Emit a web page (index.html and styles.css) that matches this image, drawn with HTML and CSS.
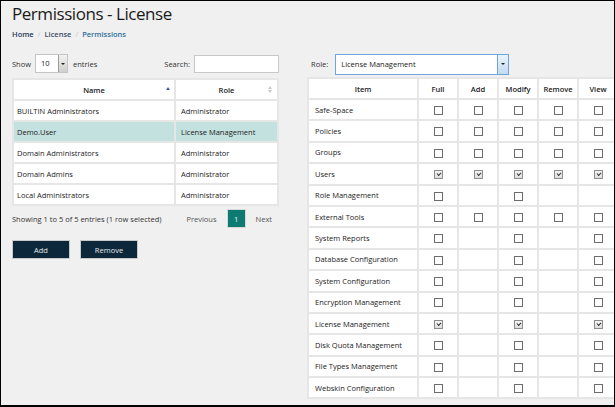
FILE: index.html
```html
<!DOCTYPE html>
<html>
<head>
<meta charset="utf-8">
<link rel="stylesheet" href="styles.css">
</head>
<body>
<div class="frame">
  <div class="page">
    <h1 class="title">Permissions - License</h1>
    <div class="crumbs">
      <span class="c-home">Home</span><span class="sep">/</span><span class="c-lic">License</span><span class="sep">/</span><span class="c-perm">Permissions</span>
    </div>
    <div class="main">
      <div class="left">
        <div class="toolbar">
          <span class="lbl">Show</span>
          <span class="select small"><span class="val">10</span><span class="arrow"></span></span>
          <span class="lbl">entries</span>
          <span class="spacer"></span>
          <span class="lbl">Search:</span>
          <span class="input"></span>
        </div>
        <table class="grid users">
          <thead>
            <tr><th class="c-name">Name<span class="sort-up"></span></th><th class="c-role">Role<span class="sort-both"></span></th></tr>
          </thead>
          <tbody>
            <tr><td>BUILTIN Administrators</td><td>Administrator</td></tr>
            <tr class="sel"><td>Demo.User</td><td>License Management</td></tr>
            <tr><td>Domain Administrators</td><td>Administrator</td></tr>
            <tr><td>Domain Admins</td><td>Administrator</td></tr>
            <tr><td>Local Administrators</td><td>Administrator</td></tr>
          </tbody>
        </table>
        <div class="info">
          <span class="count">Showing 1 to 5 of 5 entries (1 row selected)</span>
          <div class="pager">
            <span class="pg">Previous</span>
            <span class="pg cur">1</span>
            <span class="pg">Next</span>
          </div>
        </div>
        <div class="actions">
          <button class="btn">Add</button>
          <button class="btn">Remove</button>
        </div>
      </div>
      <div class="right">
        <div class="rolebar">
          <span class="lbl">Role:</span>
          <span class="select role"><span class="val">License Management</span><span class="arrow"></span></span>
        </div>
        <table class="grid perms">
          <thead>
            <tr><th class="c-item">Item</th><th>Full</th><th>Add</th><th>Modify</th><th>Remove</th><th>View</th></tr>
          </thead>
          <tbody>
            <tr><td>Safe-Space</td><td><i class="cb"></i></td><td><i class="cb"></i></td><td><i class="cb"></i></td><td><i class="cb"></i></td><td><i class="cb"></i></td></tr>
            <tr><td>Policies</td><td><i class="cb"></i></td><td><i class="cb"></i></td><td><i class="cb"></i></td><td><i class="cb"></i></td><td><i class="cb"></i></td></tr>
            <tr><td>Groups</td><td><i class="cb"></i></td><td><i class="cb"></i></td><td><i class="cb"></i></td><td><i class="cb"></i></td><td><i class="cb"></i></td></tr>
            <tr><td>Users</td><td><i class="cb on"></i></td><td><i class="cb on"></i></td><td><i class="cb on"></i></td><td><i class="cb on"></i></td><td><i class="cb on"></i></td></tr>
            <tr><td>Role Management</td><td><i class="cb"></i></td><td></td><td><i class="cb"></i></td><td></td><td></td></tr>
            <tr><td>External Tools</td><td><i class="cb"></i></td><td><i class="cb"></i></td><td><i class="cb"></i></td><td><i class="cb"></i></td><td><i class="cb"></i></td></tr>
            <tr><td>System Reports</td><td><i class="cb"></i></td><td></td><td><i class="cb"></i></td><td></td><td><i class="cb"></i></td></tr>
            <tr><td>Database Configuration</td><td><i class="cb"></i></td><td></td><td><i class="cb"></i></td><td></td><td><i class="cb"></i></td></tr>
            <tr><td>System Configuration</td><td><i class="cb"></i></td><td></td><td><i class="cb"></i></td><td></td><td><i class="cb"></i></td></tr>
            <tr><td>Encryption Management</td><td><i class="cb"></i></td><td></td><td><i class="cb"></i></td><td></td><td><i class="cb"></i></td></tr>
            <tr><td>License Management</td><td><i class="cb on"></i></td><td></td><td><i class="cb on"></i></td><td></td><td><i class="cb on"></i></td></tr>
            <tr><td>Disk Quota Management</td><td><i class="cb"></i></td><td></td><td><i class="cb"></i></td><td></td><td><i class="cb"></i></td></tr>
            <tr><td>File Types Management</td><td><i class="cb"></i></td><td></td><td><i class="cb"></i></td><td></td><td><i class="cb"></i></td></tr>
            <tr><td>Webskin Configuration</td><td><i class="cb"></i></td><td></td><td><i class="cb"></i></td><td></td><td><i class="cb"></i></td></tr>
          </tbody>
        </table>
      </div>
    </div>
  </div>
</div>
</body>
</html>
```

FILE: styles.css
```css
html, body {
  margin: 0;
  padding: 0;
  background: #f0f0f0;
}
body {
  font-family: "Open Sans", "Noto Sans", sans-serif;
  font-size: 7.5px;
  color: #222;
}
.frame {
  width: 615px;
  height: 407px;
  box-sizing: border-box;
  border: 1px solid #000;
  border-bottom-width: 2px;
  background: #f0f0f0;
  overflow: hidden;
}
.page {
  padding-left: 11px;
}
.title {
  margin: 1px 0 0 0;
  font-size: 17px;
  letter-spacing: -0.45px;
  font-weight: 400;
  line-height: 24px;
  color: #1a1a1a;
}
.crumbs {
  margin-top: 2px;
  height: 12px;
  line-height: 12px;
  font-size: 7.5px;
  font-weight: 600;
}
.crumbs .sep {
  color: #c8c8c8;
  font-weight: 400;
  margin: 0 4px;
}
.c-home { color: #23385a; }
.c-lic { color: #3b4f66; }
.c-perm { color: #2f6e9b; }
.main {
  display: flex;
  margin-top: 14px;
  gap: 28px;
}
.left {
  width: 267px;
  flex: none;
}
.right {
  width: 330px;
  flex: none;
}
.toolbar {
  display: flex;
  align-items: center;
  height: 19px;
}
.lbl {
  color: #333;
}
.spacer { flex: 1; }
.select {
  display: flex;
  align-items: stretch;
  box-sizing: border-box;
  background: #fff;
  border: 1px solid #c4c4c4;
}
.select.small {
  width: 33px;
  height: 19px;
  margin: 0 5px 0 4px;
}
.select .val {
  flex: 1;
  padding-left: 5px;
  line-height: 17px;
  color: #222;
}
.select .arrow {
  width: 8px;
  border-left: 1px solid #9a9a9a;
  background: linear-gradient(#f2f2f2, #cfcfcf);
  position: relative;
}
.select .arrow::after {
  content: "";
  position: absolute;
  left: 2px;
  top: 50%;
  margin-top: -1px;
  border-left: 2px solid transparent;
  border-right: 2px solid transparent;
  border-top: 2px solid #222;
}
.input {
  width: 85px;
  height: 18px;
  box-sizing: border-box;
  margin-left: 4px;
  background: #fff;
  border: 1px solid #c8c8c8;
}
.grid {
  border-collapse: collapse;
  background: #fff;
  table-layout: fixed;
}
.grid th, .grid td {
  border: 2px solid #e6e6e6;
  padding: 0;
  white-space: nowrap;
}
.grid th {
  font-weight: 600;
  color: #222;
  text-align: center;
  position: relative;
}
.users {
  width: 267px;
  margin-top: 5px;
}
.users th { height: 19px; }
.users td { height: 19px; padding-left: 3px; color: #222; }
.users td + td { padding-left: 5px; }
.users .c-name { width: 160px; }
.users tr.sel td { background: #c3e1de; }
.sort-up {
  position: absolute;
  right: 4px;
  top: 7px;
  border-left: 2px solid transparent;
  border-right: 2px solid transparent;
  border-bottom: 3px solid #3b5ba8;
}
.sort-both {
  position: absolute;
  right: 5px;
  top: 6px;
  width: 4px;
  height: 8px;
}
.sort-both::before, .sort-both::after {
  content: "";
  position: absolute;
  left: 0;
  border-left: 2px solid transparent;
  border-right: 2px solid transparent;
}
.sort-both::before { top: 0; border-bottom: 3px solid #c9c9c9; }
.sort-both::after { top: 4px; border-top: 3px solid #c9c9c9; }
.info {
  display: flex;
  align-items: center;
  height: 19px;
  margin-top: 3px;
}
.count {
  flex: 1;
  color: #333;
}
.pager {
  display: flex;
  align-items: center;
  margin-right: -3px;
}
.pg {
  color: #555;
  padding: 0 10px;
}
.pg.cur {
  background: #0e7b72;
  color: #e8f3f2;
  width: 19px;
  height: 19px;
  line-height: 19px;
  padding: 0;
  text-align: center;
  border: 1px solid #d8d8d8;
  box-sizing: border-box;
}
.actions {
  display: flex;
  gap: 10px;
  margin-top: 12px;
}
.btn {
  font-family: inherit;
  font-size: 7.5px;
  color: #e4e8ec;
  background: #0c2739;
  border: 1px solid #c9c9c9;
  height: 19px;
  width: 58px;
  padding: 0;
}
.rolebar {
  display: flex;
  align-items: center;
  height: 20px;
  padding-left: 4px;
}
.select.role {
  width: 174px;
  height: 21px;
  margin-left: 7px;
  border-color: #6ea5dc;
}
.select.role .val { line-height: 19px; }
.select.role .arrow {
  width: 10px;
  border-left-color: #6ea5dc;
  background: linear-gradient(#eaf3fc, #c2daf1);
}
.select.role .arrow::after { left: 3px; }
.perms {
  width: 312px;
  margin-top: 3px;
}
.perms .c-item { width: 108px; }
.perms th { height: 19px; }
.perms td {
  height: 19.4px;
  text-align: center;
}
.perms td:first-child {
  text-align: left;
  padding-left: 6px;
  color: #222;
}
.cb {
  display: inline-block;
  vertical-align: middle;
  width: 9px;
  height: 9px;
  box-sizing: border-box;
  border: 1px solid #6c6c6c;
  background: #fff;
  position: relative;
}
.cb.on {
  border-color: #8c8c8c;
  background: linear-gradient(#f4f4f4, #dedede);
}
.cb.on::after {
  content: "";
  position: absolute;
  left: 2px;
  top: 1px;
  width: 3px;
  height: 2px;
  border-left: 1px solid #333;
  border-bottom: 1px solid #333;
  transform: rotate(-45deg);
}
```
